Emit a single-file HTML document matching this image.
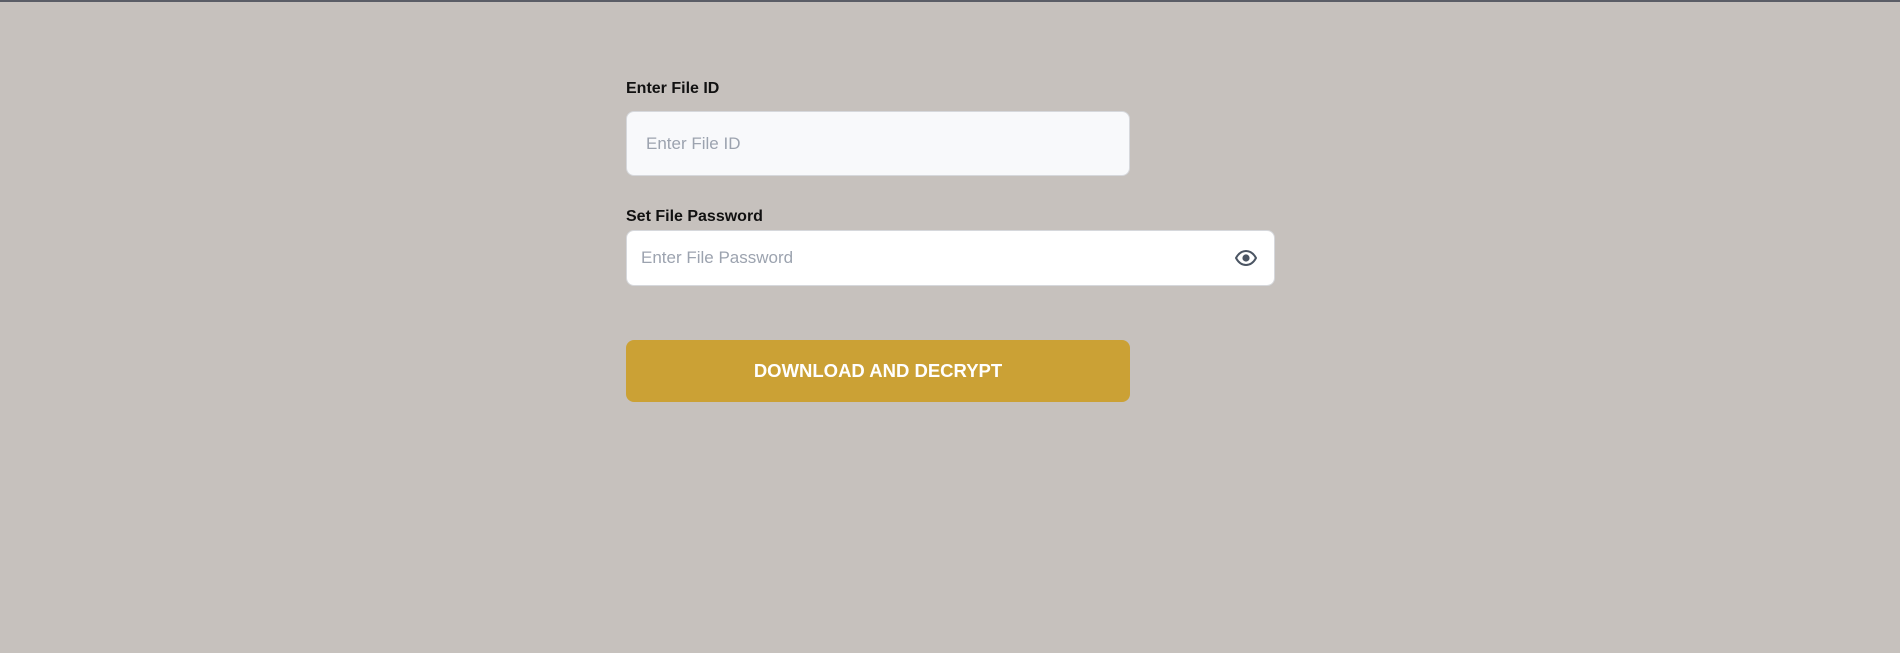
<!DOCTYPE html>
<html><head><meta charset="utf-8"><style>
html,body{margin:0;padding:0}
body{width:1900px;height:653px;background:#c6c1bd;position:relative;overflow:hidden;font-family:"Liberation Sans",sans-serif}
.top{position:absolute;left:0;top:0;width:1900px;height:2px;background:#5a5d66}
.lbl{position:absolute;left:626px;font-size:16px;font-weight:bold;color:#111}
.in{position:absolute;box-sizing:border-box;border:1px solid #d6d8dc;border-radius:8px;font-size:17px;color:#9ca3af;display:flex;align-items:center}
.btn{position:absolute;left:626px;top:340px;width:504px;height:62px;background:#cba135;border-radius:8px;color:#fff;font-weight:bold;font-size:18.5px;display:flex;align-items:center;justify-content:center}
</style></head><body>
<div class="top"></div>
<div class="lbl" style="top:80px">Enter File ID</div>
<div class="in" style="left:626px;top:111px;width:504px;height:65px;background:#f8f9fb;padding-left:19px">Enter File ID</div>
<div class="lbl" style="top:208px">Set File Password</div>
<div class="in" style="left:626px;top:230px;width:649px;height:56px;background:#fff;padding-left:14px">Enter File Password
<svg style="position:absolute;left:608px;top:19px" width="22" height="16" viewBox="0 0 22 16"><path d="M1 8C4 2.5 7.5 1 11 1s7 1.5 10 7c-3 5.5-6.5 7-10 7S4 13.5 1 8z" fill="none" stroke="#4b5563" stroke-width="2"/><circle cx="11" cy="8" r="3.6" fill="#4b5563"/></svg>
</div>
<div class="btn">DOWNLOAD AND DECRYPT</div>
</body></html>
